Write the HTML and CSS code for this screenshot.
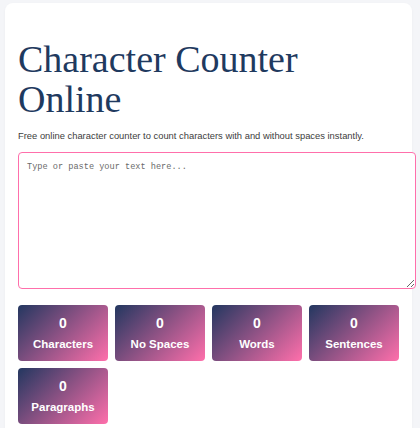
FILE: index.html
```html
<!DOCTYPE html>
<html lang="en">
<head>
    <meta charset="UTF-8">
    <meta name="viewport" content="width=device-width, initial-scale=1.0">
    <title>Character Counter Online</title>
    <link rel="stylesheet" href="styles.css">
</head>
<body>
    <div class="container">
        <h1>Character Counter Online</h1>
        <p class="intro">Free online character counter to count characters with and without spaces instantly.</p>

        <textarea id="textInput" placeholder="Type or paste your text here..."></textarea>

        <div class="stats">
            <div class="stat-box">
                <div class="stat-value" id="charCount">0</div>
                <div class="stat-label">Characters</div>
            </div>
            <div class="stat-box">
                <div class="stat-value" id="noSpaceCount">0</div>
                <div class="stat-label">No Spaces</div>
            </div>
            <div class="stat-box">
                <div class="stat-value" id="wordCount">0</div>
                <div class="stat-label">Words</div>
            </div>
            <div class="stat-box">
                <div class="stat-value" id="sentenceCount">0</div>
                <div class="stat-label">Sentences</div>
            </div>
            <div class="stat-box">
                <div class="stat-value" id="paragraphCount">0</div>
                <div class="stat-label">Paragraphs</div>
            </div>
        </div>
    </div>

    <script>
        const input = document.getElementById('textInput');

        // Count everything on each keystroke
        function updateCounts() {
            const text = input.value;
            const trimmed = text.trim();

            document.getElementById('charCount').textContent = text.length;
            document.getElementById('noSpaceCount').textContent = text.replace(/\s/g, '').length;
            document.getElementById('wordCount').textContent = trimmed ? trimmed.split(/\s+/).length : 0;
            document.getElementById('sentenceCount').textContent = trimmed ? (trimmed.match(/[^.!?]+[.!?]*/g) || []).length : 0;
            document.getElementById('paragraphCount').textContent = trimmed ? trimmed.split(/\n\s*\n/).length : 0;
        }

        input.addEventListener('input', updateCounts);
    </script>
</body>
</html>
```

FILE: styles.css
```css
* {
    box-sizing: border-box;
}

html, body {
    overflow: hidden;
}

body {
    margin: 0;
    padding: 3px 0 0 5px;
    background: #f4f5f8;
    font-family: "Liberation Sans", Arial, sans-serif;
}

.container {
    width: 407px;
    min-height: 440px;
    background: #fff;
    border-radius: 8px;
    padding: 13px;
    box-shadow: 0 1px 3px rgba(0, 0, 0, 0.04);
}

h1 {
    margin: 23px 0 0;
    font-family: "Liberation Serif", "Times New Roman", serif;
    font-weight: normal;
    font-size: 38px;
    line-height: 40px;
    color: #1f3a5f;
}

.intro {
    margin: 10px 0 9px;
    font-size: 9.4px;
    line-height: 14px;
    color: #3d3d3d;
}

textarea {
    display: block;
    box-sizing: content-box;
    width: 100%;
    height: 119px;
    margin: 0 0 16px;
    padding: 9px 7px 7px 8px;
    border: 1px solid #ff6fab;
    border-radius: 4px;
    font-family: "Liberation Mono", "Courier New", monospace;
    font-size: 8.6px;
    color: #333;
    outline: none;
}

textarea::placeholder {
    color: #6a6a6a;
}

.stats {
    display: grid;
    grid-template-columns: repeat(4, 1fr);
    gap: 7px;
}

.stat-box {
    display: flex;
    flex-direction: column;
    align-items: center;
    padding: 10px 4px;
    border-radius: 4px;
    background: linear-gradient(135deg, #233760, #ff6fab);
    color: #fff;
    font-weight: bold;
}

.stat-value {
    font-size: 14px;
    line-height: 16px;
}

.stat-label {
    margin-top: 6px;
    font-size: 11.5px;
    line-height: 14px;
}
```
